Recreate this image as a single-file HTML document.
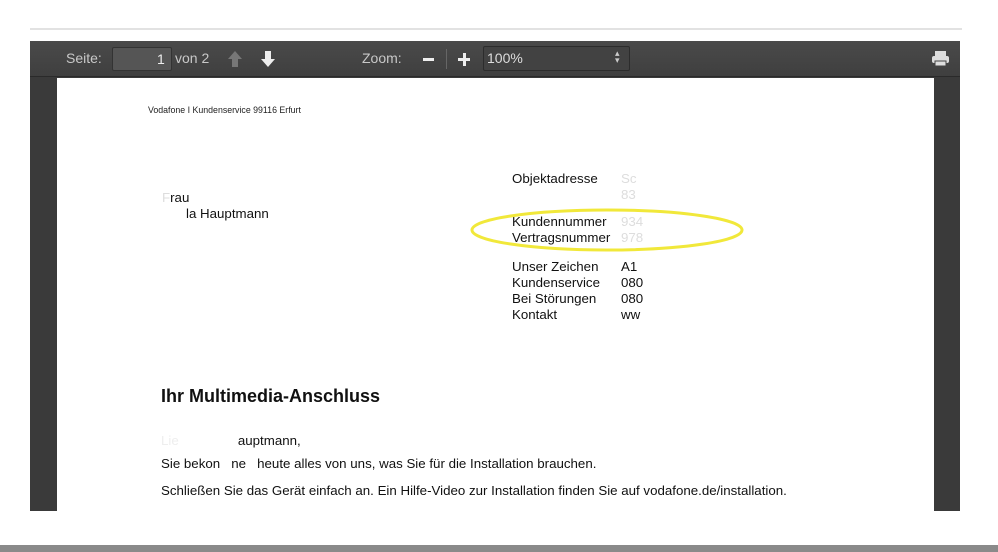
<!DOCTYPE html>
<html><head><meta charset="utf-8"><style>
*{margin:0;padding:0;box-sizing:border-box}
body{width:998px;height:552px;background:#fff;position:relative;overflow:hidden;font-family:"Liberation Sans",Arial,sans-serif}
.a{position:absolute;white-space:nowrap}
.tb{color:#c8c8c8;font-size:14px}
.d{font-size:13.3px;color:#111}
.v{color:#ddd}
</style></head><body>
<div class="a" style="left:30px;top:28px;width:932px;height:2px;background:#e2e2e2"></div>
<div class="a" style="left:30px;top:41px;width:930px;height:470px;background:#3a3a3a"></div>
<div class="a" style="left:30px;top:41px;width:930px;height:36px;background:linear-gradient(#4a4a4a,#3f3f3f);border-bottom:1px solid #2a2a2a"></div>
<div class="a tb" style="left:66px;top:50px">Seite:</div>
<div class="a" style="left:112px;top:47px;width:60px;height:24px;background:#555;border:1px solid #333;border-radius:2px"></div>
<div class="a tb" style="left:157px;top:51px;color:#eee">1</div>
<div class="a tb" style="left:175px;top:50px">von 2</div>
<svg class="a" style="left:227px;top:50px" width="16" height="18"><path d="M8 1 L15 9 H11 V17 H5 V9 H1 Z" fill="#777"/></svg>
<svg class="a" style="left:260px;top:50px" width="16" height="18"><path d="M8 17 L15 9 H11 V1 H5 V9 H1 Z" fill="#eee"/></svg>
<div class="a tb" style="left:362px;top:50px">Zoom:</div>
<div class="a" style="left:423px;top:58px;width:11px;height:3px;background:#eee"></div>
<div class="a" style="left:446px;top:49px;width:1px;height:20px;background:#666"></div>
<div class="a" style="left:458px;top:58px;width:12px;height:3px;background:#eee"></div>
<div class="a" style="left:462.5px;top:53px;width:3px;height:13px;background:#eee"></div>
<div class="a" style="left:483px;top:46px;width:147px;height:25px;background:#424242;border:1px solid #2c2c2c;border-radius:2px"></div>
<div class="a tb" style="left:487px;top:50px;color:#ddd">100%</div>
<div class="a" style="left:615px;top:50px;color:#ccc;font-size:9px;line-height:7px">▴<br>▾</div>
<svg class="a" style="left:931px;top:50px" width="19" height="17"><rect x="4" y="1" width="11" height="5" fill="#ddd"/><rect x="1" y="6" width="17" height="7" rx="2" fill="#ddd"/><rect x="4" y="11" width="11" height="5" fill="#ddd" stroke="#444" stroke-width="1"/></svg>
<div class="a" style="left:57px;top:78px;width:877px;height:433px;background:#fff"></div>
<div class="a" style="left:148px;top:105px;font-size:8.8px;color:#222">Vodafone I Kundenservice 99116 Erfurt</div>
<div class="a d" style="left:162px;top:190px"><span style="color:#ddd">F</span>rau</div>
<div class="a d" style="left:186px;top:206px">la Hauptmann</div>
<div class="a d" style="left:512px;top:171px">Objektadresse</div>
<div class="a d" style="left:512px;top:214px">Kundennummer</div>
<div class="a d" style="left:512px;top:230px">Vertragsnummer</div>
<div class="a d" style="left:512px;top:259px">Unser Zeichen</div>
<div class="a d" style="left:512px;top:275px">Kundenservice</div>
<div class="a d" style="left:512px;top:291px">Bei Störungen</div>
<div class="a d" style="left:512px;top:307px">Kontakt</div>
<div class="a d v" style="left:621px;top:171px">Sc</div>
<div class="a d v" style="left:621px;top:187px">83</div>
<div class="a d v" style="left:621px;top:214px">934</div>
<div class="a d v" style="left:621px;top:230px">978</div>
<div class="a d" style="left:621px;top:259px">A1</div>
<div class="a d" style="left:621px;top:275px">080</div>
<div class="a d" style="left:621px;top:291px">080</div>
<div class="a d" style="left:621px;top:307px">ww</div>
<svg class="a" style="left:468px;top:206px" width="280" height="50"><ellipse cx="139" cy="24" rx="135" ry="20" fill="none" stroke="#f1e83a" stroke-width="3"/></svg>
<div class="a" style="left:161px;top:386px;font-size:18px;font-weight:bold;color:#111">Ihr Multimedia-Anschluss</div>
<div class="a d" style="left:161px;top:433px"><span style="color:#eee">Lie</span><span style="color:#fff">be Frau H</span>auptmann,</div>
<div class="a d" style="left:161px;top:456px">Sie bekon<span style="color:#fff">m</span>ne<span style="color:#fff">n</span> heute alles von uns, was Sie für die Installation brauchen.</div>
<div class="a d" style="left:161px;top:483px">Schließen Sie das Gerät einfach an. Ein Hilfe-Video zur Installation finden Sie auf vodafone.de/installation.</div>
<div class="a" style="left:0;top:545px;width:998px;height:7px;background:#8a8a8a"></div>
</body></html>
